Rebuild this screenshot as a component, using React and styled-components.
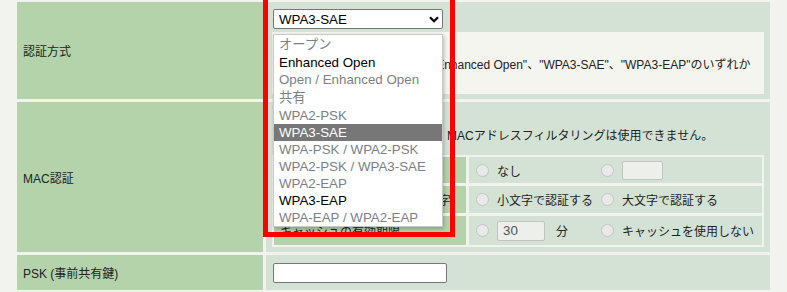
import React from 'react'
import styled, { createGlobalStyle } from 'styled-components'

const GlobalStyle = createGlobalStyle`
  html, body {
    margin: 0;
    padding: 0;
    background: #f2f2ee;
  }
  body {
    font-family: "Liberation Sans", "Noto Sans CJK JP", sans-serif;
    font-size: 12px;
    color: #222;
  }
`

const Page = styled.div`
  position: relative;
  width: 787px;
  height: 292px;
  overflow: hidden;
  box-sizing: border-box;
  padding: 2px 0 0 17px;
  background: #f2f2ee;
`

const Form = styled.div`
  display: grid;
  grid-template-columns: 246px 504px;
  grid-template-rows: 97px 150px 35px;
  gap: 3px;
`

const Label = styled.div`
  display: flex;
  align-items: center;
  padding-left: 6px;
  background: #b4d3aa;
  white-space: nowrap;
`

const Value = styled.div`
  position: relative;
  box-sizing: border-box;
  padding: ${p => p.$pad || '7px 6px'};
  background: #d4e2d6;
`

const Select = styled.div`
  box-sizing: border-box;
  width: 170px;
  height: 20px;
  margin-left: 1px;
  padding: 0 3px 0 5px;
  display: flex;
  align-items: center;
  justify-content: space-between;
  background: #fff;
  border: 1px solid #767676;
  border-radius: 2px;
  font-family: "Liberation Sans", "Noto Sans CJK JP", sans-serif;
  font-size: 13.33px;
  color: #000;
`

const Note = styled.div`
  height: 62px;
  margin-top: 3px;
  padding-left: 14px;
  display: flex;
  align-items: center;
  background: #f5f5ef;
  white-space: nowrap;
  overflow: hidden;
`

const OptionList = styled.ul`
  position: absolute;
  left: 7px;
  top: 32px;
  z-index: 2;
  box-sizing: border-box;
  width: 170px;
  margin: 0;
  padding: 0;
  list-style: none;
  background: #fff;
  border: 1px solid #c9c9c9;
  box-shadow: 1px 2px 4px rgba(0, 0, 0, 0.25);
`

const Option = styled.li`
  padding-left: 5px;
  line-height: ${p => (p.$cjk ? '19px' : '17px')};
  font-size: 13.33px;
  white-space: nowrap;
  color: ${p => (p.$selected ? '#fff' : p.$enabled ? '#000' : '#7b7f86')};
  background: ${p => (p.$selected ? '#777' : 'transparent')};
`

const Message = styled.p`
  margin: 0;
  padding-left: 10px;
  line-height: 18px;
  white-space: nowrap;
`

const SubTable = styled.div`
  display: grid;
  grid-template-columns: 192px 1fr;
  grid-template-rows: 26px 27px 29px;
  gap: 3px;
  margin-top: 10px;
  padding: 2px;
  background: #f2f2ee;
`

const SubLabel = styled.div`
  display: flex;
  align-items: center;
  padding-left: 6px;
  background: #b4d3aa;
  white-space: nowrap;
  overflow: hidden;
`

const SubValue = styled.div`
  display: flex;
  align-items: center;
  padding-left: 7px;
  background: #d4e2d6;
`

const Choice = styled.div`
  display: flex;
  align-items: center;
  gap: 8px;
  width: ${p => p.$w || 'auto'};
  white-space: nowrap;
`

const Radio = styled.span`
  flex-shrink: 0;
  box-sizing: border-box;
  width: 13px;
  height: 13px;
  border-radius: 50%;
  background: #e9e9e9;
  border: 1px solid #c4c4c4;
`

const SmallBox = styled.div`
  box-sizing: border-box;
  width: ${p => p.$w}px;
  height: ${p => p.$h}px;
  padding-left: 5px;
  display: flex;
  align-items: center;
  background: #ecefea;
  border: 1px solid #c3c3c3;
  border-radius: 2px;
  font-size: 13.33px;
  color: #555;
`

const Unit = styled.span`
  margin-left: 3px;
`

const TextInput = styled.div`
  box-sizing: border-box;
  width: 174px;
  height: 20px;
  margin-left: 1px;
  background: #fff;
  border: 1px solid #767676;
  border-radius: 2px;
`

const Highlight = styled.div`
  position: absolute;
  left: 263px;
  top: -5px;
  z-index: 3;
  box-sizing: border-box;
  width: 192px;
  height: 242px;
  border: 5px solid #ff0000;
  pointer-events: none;
`

const options = [
  { label: 'オープン', cjk: true },
  { label: 'Enhanced Open', enabled: true },
  { label: 'Open / Enhanced Open' },
  { label: '共有', cjk: true },
  { label: 'WPA2-PSK' },
  { label: 'WPA3-SAE', enabled: true, selected: true },
  { label: 'WPA-PSK / WPA2-PSK' },
  { label: 'WPA2-PSK / WPA3-SAE' },
  { label: 'WPA2-EAP' },
  { label: 'WPA3-EAP', enabled: true },
  { label: 'WPA-EAP / WPA2-EAP' }
]

function Chevron () {
  return (
    <svg width='10' height='7' viewBox='0 0 10 7'>
      <path d='M1 1.2 L5 5.2 L9 1.2' fill='none' stroke='#000' strokeWidth='2.2' />
    </svg>
  )
}

export default function App () {
  return (
    <>
      <GlobalStyle />
      <Page>
        <Form>
          <Label>認証方式</Label>
          <Value $pad='7px 6px 5px 6px'>
            <Select>
              WPA3-SAE
              <Chevron />
            </Select>
            <Note>
              暗号化方式には、"Open"、"Enhanced Open"、"WPA3-SAE"、"WPA3-EAP"のいずれか
            </Note>
            <OptionList>
              {options.map(o => (
                <Option key={o.label} $cjk={o.cjk} $enabled={o.enabled} $selected={o.selected}>
                  {o.label}
                </Option>
              ))}
            </OptionList>
          </Value>

          <Label>MAC認証</Label>
          <Value $pad='25px 6px 5px 6px'>
            <Message>WPA3の認証方式を選択時は、MACアドレスフィルタリングは使用できません。</Message>
            <SubTable>
              <SubLabel>認証方法</SubLabel>
              <SubValue>
                <Choice $w='125px'>
                  <Radio />
                  なし
                </Choice>
                <Choice>
                  <Radio />
                  <SmallBox $w={41} $h={19} />
                </Choice>
              </SubValue>

              <SubLabel>認証に使うMACアドレスの文字</SubLabel>
              <SubValue>
                <Choice $w='125px'>
                  <Radio />
                  小文字で認証する
                </Choice>
                <Choice>
                  <Radio />
                  大文字で認証する
                </Choice>
              </SubValue>

              <SubLabel>キャッシュの有効期限</SubLabel>
              <SubValue>
                <Choice $w='125px'>
                  <Radio />
                  <SmallBox $w={48} $h={20}>30</SmallBox>
                  <Unit>分</Unit>
                </Choice>
                <Choice>
                  <Radio />
                  キャッシュを使用しない
                </Choice>
              </SubValue>
            </SubTable>
          </Value>

          <Label>PSK (事前共有鍵)</Label>
          <Value $pad='8px 6px'>
            <TextInput />
          </Value>
        </Form>
        <Highlight />
      </Page>
    </>
  )
}
